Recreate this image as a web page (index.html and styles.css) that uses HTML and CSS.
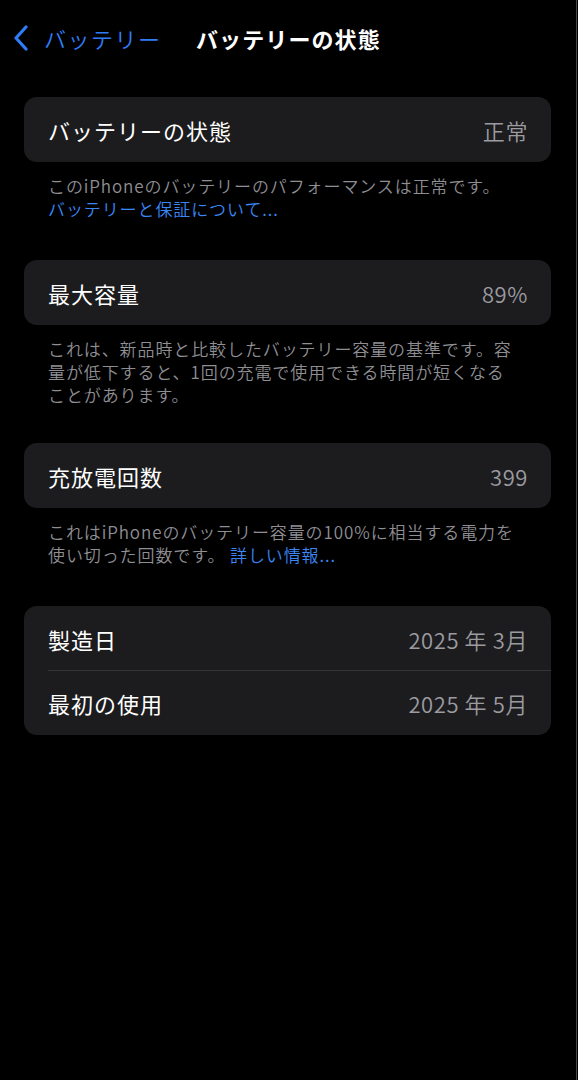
FILE: index.html
```html
<!DOCTYPE html>
<html lang="ja">
<head>
  <meta charset="UTF-8">
  <meta name="viewport" content="width=device-width, initial-scale=1.0">
  <title>バッテリーの状態</title>
  <link rel="stylesheet" href="styles.css">
</head>
<body>
  <div class="screen">
    <header class="nav">
      <a class="back" href="#">
        <svg class="chevron" width="18" height="26" viewBox="0 0 18 26">
          <path d="M14 2 L4 13 L14 24" fill="none" stroke="currentColor" stroke-width="3.2" stroke-linecap="round" stroke-linejoin="round"/>
        </svg>
        <span>バッテリー</span>
      </a>
      <h1 class="nav-title">バッテリーの状態</h1>
    </header>

    <main class="content">
      <section class="group">
        <div class="card">
          <div class="row">
            <span class="label">バッテリーの状態</span>
            <span class="value">正常</span>
          </div>
        </div>
        <p class="note">このiPhoneのバッテリーのパフォーマンスは正常です。<br><a href="#">バッテリーと保証について...</a></p>
      </section>

      <section class="group tight">
        <div class="card">
          <div class="row">
            <span class="label">最大容量</span>
            <span class="value">89%</span>
          </div>
        </div>
        <p class="note">これは、新品時と比較したバッテリー容量の基準です。容<br>量が低下すると、1回の充電で使用できる時間が短くなる<br>ことがあります。</p>
      </section>

      <section class="group">
        <div class="card">
          <div class="row">
            <span class="label">充放電回数</span>
            <span class="value">399</span>
          </div>
        </div>
        <p class="note">これはiPhoneのバッテリー容量の100%に相当する電力を<br>使い切った回数です。 <a href="#">詳しい情報...</a></p>
      </section>

      <section class="group">
        <div class="card">
          <div class="row">
            <span class="label">製造日</span>
            <span class="value">2025 年 3月</span>
          </div>
          <div class="row">
            <span class="label">最初の使用</span>
            <span class="value">2025 年 5月</span>
          </div>
        </div>
      </section>
    </main>
  </div>
</body>
</html>
```

FILE: styles.css
```css
* {
  box-sizing: border-box;
}

html,
body {
  margin: 0;
  background-color: #000;
}

body {
  font-family: "Noto Sans CJK JP", "Noto Sans", sans-serif;
  color: #fff;
}

.screen {
  width: 577px;
  min-height: 1080px;
  border-right: 1px solid #4a4a4a;
}

/* navigation bar */
.nav {
  height: 78px;
  display: flex;
  align-items: center;
  padding: 0 0 2px 12px;
}

.back {
  display: flex;
  align-items: center;
  gap: 14px;
  color: #2f7df6;
  text-decoration: none;
  font-size: 22px;
  font-weight: 350;
  letter-spacing: 1.5px;
  width: 184px;
}

.chevron {
  flex: none;
}

.nav-title {
  margin: 0;
  font-size: 22px;
  font-weight: 700;
  letter-spacing: 1.1px;
}

/* grouped list */
.content {
  padding: 19px 25px 0 24px;
}

.group {
  margin-bottom: 40px;
}

.group.tight {
  margin-bottom: 37px;
}

.card {
  background-color: #1c1c1e;
  border-radius: 13px;
  overflow: hidden;
}

.row {
  height: 65px;
  display: flex;
  align-items: center;
  justify-content: space-between;
  padding: 0 23px 0 24px;
  position: relative;
}

.row + .row {
  height: 64px;
}

.row + .row::before {
  content: "";
  position: absolute;
  top: -1px;
  left: 24px;
  right: 0;
  height: 1px;
  background-color: #343437;
}

.label {
  font-size: 22px;
  font-weight: 400;
  letter-spacing: 1px;
}

.value {
  font-size: 22px;
  font-weight: 350;
  color: #9b9ba0;
  letter-spacing: 0.6px;
}

.note {
  margin: 0;
  padding: 12px 24px 0;
  font-size: 17px;
  font-weight: 350;
  line-height: 23px;
  color: #8e8e93;
  letter-spacing: 0.9px;
}

.note a {
  color: #3a87f5;
  text-decoration: none;
}
```
